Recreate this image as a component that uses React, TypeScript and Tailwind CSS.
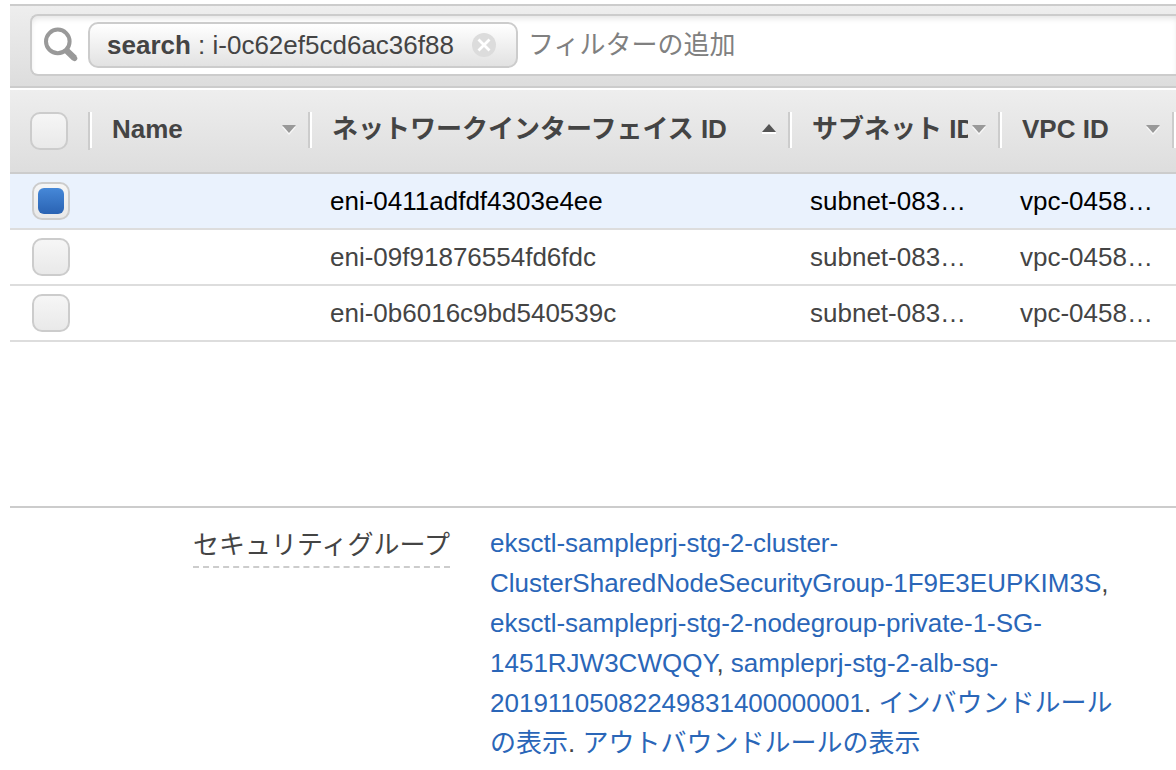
import React, { useState } from 'react';

type SortDir = 'asc' | 'none';

interface Column {
  label: string;
  width: string;
  sort: SortDir;
}

interface NetworkInterface {
  id: string;
  subnet: string;
  vpc: string;
}

const columns: Column[] = [
  { label: 'Name', width: 'w-[220px]', sort: 'none' },
  { label: 'ネットワークインターフェイス ID', width: 'w-[480px]', sort: 'asc' },
  { label: 'サブネット ID', width: 'w-[210px]', sort: 'none' },
  { label: 'VPC ID', width: 'w-[174px]', sort: 'none' },
];

const interfaces: NetworkInterface[] = [
  { id: 'eni-0411adfdf4303e4ee', subnet: 'subnet-083…', vpc: 'vpc-0458…' },
  { id: 'eni-09f91876554fd6fdc', subnet: 'subnet-083…', vpc: 'vpc-0458…' },
  { id: 'eni-0b6016c9bd540539c', subnet: 'subnet-083…', vpc: 'vpc-0458…' },
];

const SearchIcon: React.FC = () => (
  <svg width="36" height="36" viewBox="0 0 36 36" fill="none" stroke="#999" className="shrink-0">
    <circle cx="14.8" cy="14.4" r="11.8" strokeWidth="4" />
    <path d="M23.5 23.5L31.6 31.2" strokeWidth="6.4" />
    <path d="M30.6 30.4l1 1" strokeWidth="5.4" strokeLinecap="round" />
  </svg>
);

const SortArrow: React.FC<{ dir: SortDir }> = ({ dir }) => (
  <svg width="14" height="12" viewBox="0 0 14 12" className="shrink-0">
    {dir === 'asc' ? (
      <>
        <path d="M0 8h14v2H0z" fill="#fff" />
        <path d="M7 0l7 8H0z" fill="#555" />
      </>
    ) : (
      <>
        <path d="M0 3l7 8 7-8z" fill="#f8f8f8" />
        <path d="M0 1h14L7 9z" fill="#999" />
      </>
    )}
  </svg>
);

const Checkbox: React.FC<React.InputHTMLAttributes<HTMLInputElement>> = (props) => (
  <input
    type="checkbox"
    className="block size-[38px] appearance-none rounded-[10px] border-2 border-[#ccc] bg-linear-to-b from-[#f6f6f6] to-[#e9e9e9] checked:before:m-1 checked:before:block checked:before:size-[26px] checked:before:rounded-md checked:before:bg-linear-to-b checked:before:from-[#4688d8] checked:before:to-[#2a63b3] checked:before:content-['']"
    {...props}
  />
);

const FilterBar: React.FC = () => (
  <div className="border-y-2 border-[#ccc] bg-linear-to-b from-[#eee] to-[#ddd] pt-2 pb-2.5 pl-5">
    <div className="flex h-[62px] items-center rounded-l-lg border-2 border-r-0 border-[#ccc] bg-white pl-[11px] shadow-[inset_0_4px_6px_-2px_rgba(0,0,0,0.12)]">
      <SearchIcon />
      <div className="ml-[9px] flex h-[46px] shrink-0 items-center rounded-[10px] border-2 border-[#ccc] bg-linear-to-b from-white to-[#e2e2e2] pr-5 pl-[17px]">
        <span className="whitespace-pre">
          <b>search</b> : i-0c62ef5cd6ac36f88
        </span>
        <button type="button" aria-label="フィルターを削除" className="ml-[18px]">
          <svg width="24" height="24" viewBox="0 0 24 24" className="block">
            <circle cx="12" cy="12" r="12" fill="#dcdcdc" />
            <path d="M6.5 6.5l11 11M17.5 6.5l-11 11" stroke="#fff" strokeWidth="2.8" />
          </svg>
        </button>
      </div>
      <input
        type="text"
        aria-label="フィルター"
        placeholder="フィルターの追加"
        className="h-[46px] min-w-0 flex-1 px-2.5 outline-none placeholder:text-[#808080]"
      />
    </div>
  </div>
);

const InterfaceTable: React.FC = () => {
  const [selected, setSelected] = useState<string[]>([interfaces[0].id]);

  const toggle = (id: string) =>
    setSelected((prev) => (prev.includes(id) ? prev.filter((item) => item !== id) : [...prev, id]));

  const toggleAll = () =>
    setSelected(selected.length === interfaces.length ? [] : interfaces.map((item) => item.id));

  return (
    <table className="mt-0.5 w-full table-fixed border-separate border-spacing-0 text-left">
      <thead>
        <tr className="h-[84px] bg-linear-to-b from-[#eee] to-[#ddd]">
          <th className="w-20 border-b-2 border-[#ccc] pt-[22px] align-top">
            <div className="border-r-2 border-[#ccc] pl-5">
              <Checkbox
                aria-label="すべて選択"
                checked={selected.length === interfaces.length}
                onChange={toggleAll}
              />
            </div>
          </th>
          {columns.map((col) => (
            <th key={col.label} className={`${col.width} border-b-2 border-[#ccc] pt-[22px] align-top`}>
              <button
                type="button"
                className="flex h-9 w-full items-center gap-1 border-r-2 border-l-2 border-r-[#ccc] border-l-white pr-3 pl-5 text-left font-bold"
              >
                <span className="min-w-0 flex-1 overflow-hidden pb-0.5 leading-8 whitespace-nowrap">{col.label}</span>
                <SortArrow dir={col.sort} />
              </button>
            </th>
          ))}
          <th className="border-b-2 border-[#ccc] pt-[22px] align-top">
            <div className="h-9 border-l-2 border-white"></div>
          </th>
        </tr>
      </thead>
      <tbody>
        {interfaces.map((item) => {
          const checked = selected.includes(item.id);
          return (
            <tr
              key={item.id}
              className={`h-14 *:border-b-2 *:border-[#ddd] ${checked ? 'bg-[#eaf2fd] text-black' : ''}`}
            >
              <td className="pl-[22px]">
                <Checkbox aria-label={item.id} checked={checked} onChange={() => toggle(item.id)} />
              </td>
              <td></td>
              <td className="pl-5">{item.id}</td>
              <td className="pl-5">{item.subnet}</td>
              <td className="pl-5">{item.vpc}</td>
              <td></td>
            </tr>
          );
        })}
      </tbody>
    </table>
  );
};

const Link: React.FC<{ children: React.ReactNode }> = ({ children }) => (
  <a href="#" className="text-[#2a66b8]">
    {children}
  </a>
);

const Details: React.FC = () => (
  <dl className="mt-[164px] flex gap-10 border-t-2 border-[#ccc] pt-[15px] leading-10">
    <dt className="w-[440px] shrink-0 pt-0.5 text-right">
      <span className="inline-block border-b-2 border-dashed border-[#ccc] pb-px">セキュリティグループ</span>
    </dt>
    <dd className="min-w-0 flex-1 pr-11">
      <Link>eksctl-sampleprj-stg-2-cluster-ClusterSharedNodeSecurityGroup-1F9E3EUPKIM3S</Link>,{' '}
      <Link>eksctl-sampleprj-stg-2-nodegroup-private-1-SG-1451RJW3CWQQY</Link>,{' '}
      <Link>sampleprj-stg-2-alb-sg-20191105082249831400000001</Link>. <Link>インバウンドルールの表示</Link>.{' '}
      <Link>アウトバウンドルールの表示</Link>
    </dd>
  </dl>
);

const App: React.FC = () => {
  return (
    <main
      lang="ja"
      className="min-h-screen overflow-hidden bg-white pt-1 pl-2.5 font-['Liberation_Sans','Noto_Sans_CJK_JP',sans-serif] text-[26px] leading-9 text-[#444]"
    >
      <FilterBar />
      <InterfaceTable />
      <Details />
    </main>
  );
};

export default App;
